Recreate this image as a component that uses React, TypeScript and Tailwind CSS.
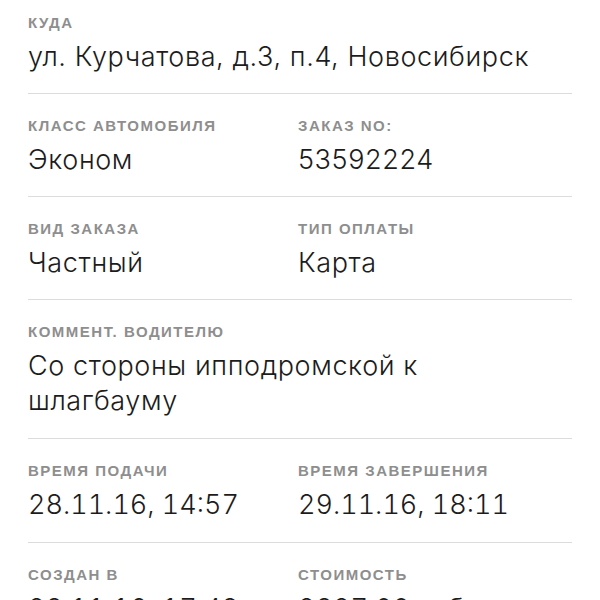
import React from "react";

const Label = ({ children }: { children: React.ReactNode }) => (
  <div
    className="text-[15px] leading-4 font-bold uppercase text-[#8e8e8e] tracking-[1.5px] whitespace-nowrap"
    style={{ fontFamily: "'Liberation Sans', Arial, sans-serif" }}
  >
    {children}
  </div>
);

const Value = ({ children, nums }: { children: React.ReactNode; nums?: boolean }) => (
  <div
    className={
      nums
        ? "mt-2 text-[27px] leading-[35px] font-light tracking-[0px] text-[#1c1c1c] tabular-nums"
        : "mt-2 text-[27px] leading-[35px] font-light tracking-[0.6px] text-[#1c1c1c]"
    }
    style={{ fontFamily: "Inter, 'Liberation Sans', sans-serif" }}
  >
    {children}
  </div>
);

const Field = ({ label, value, nums }: { label: string; value: React.ReactNode; nums?: boolean }) => (
  <div>
    <Label>{label}</Label>
    <Value nums={nums}>{value}</Value>
  </div>
);

export default function App() {
  const rows: [string, string, string, string][] = [
    ["Класс автомобиля", "Эконом", "Заказ No:", "53592224"],
    ["Вид заказа", "Частный", "Тип оплаты", "Карта"],
  ];
  return (
    <div className="w-[600px] h-[600px] overflow-hidden bg-white px-7">
      <div className="pt-[15px] pb-[19px] border-b border-[#dcdcdc]">
        <Field label="Куда" value="ул. Курчатова, д.3, п.4, Новосибирск" />
      </div>
      {rows.map((r) => (
        <div key={r[0]} className="pt-6 pb-[19px] border-b border-[#dcdcdc] grid grid-cols-[270px_1fr]">
          <Field label={r[0]} value={r[1]} />
          <Field label={r[2]} value={r[3]} />
        </div>
      ))}
      <div className="pt-6 pb-[20px] border-b border-[#dcdcdc]">
        <Field label="Коммент. водителю" value={<>Со стороны ипподромской к<br />шлагбауму</>} />
      </div>
      <div className="pt-6 pb-[20px] border-b border-[#dcdcdc] grid grid-cols-[270px_1fr]">
        <Field label="Время подачи" value="28.11.16, 14:57" nums />
        <Field label="Время завершения" value="29.11.16, 18:11" nums />
      </div>
      <div className="pt-6 pb-[19px] grid grid-cols-[270px_1fr]">
        <Field label="Создан в" value="28.11.16, 17:43" nums />
        <Field label="Стоимость" value="2827.00 руб." nums />
      </div>
    </div>
  );
}
